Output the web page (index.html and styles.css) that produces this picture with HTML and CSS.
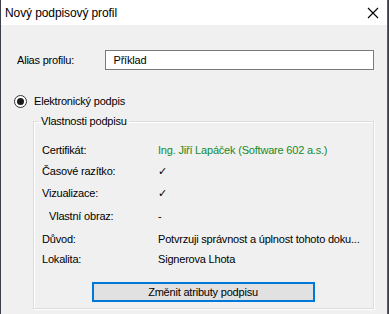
FILE: index.html
```html
<!DOCTYPE html>
<html lang="cs">
<head>
  <meta charset="UTF-8">
  <title>Nový podpisový profil</title>
  <link rel="stylesheet" href="styles.css">
</head>
<body>
  <div class="window">
    <!-- titulek -->
    <div class="titlebar">
      <span class="title">Nový podpisový profil</span>
      <svg class="close" width="12" height="12" viewBox="0 0 12 12">
        <path d="M1 1 L11 11 M11 1 L1 11" stroke="#000" stroke-width="1.1" fill="none"/>
      </svg>
    </div>

    <div class="content">
      <div class="alias-row">
        <label class="alias-label">Alias profilu:</label>
        <div class="input">Příklad</div>
      </div>

      <div class="radio-row">
        <span class="radio"><span class="radio-dot"></span></span>
        <span>Elektronický podpis</span>
      </div>

      <fieldset class="group">
        <legend>Vlastnosti podpisu</legend>
        <div class="props">
          <div>Certifikát:</div>
          <div class="green">Ing. Jiří Lapáček (Software 602 a.s.)</div>
          <div>Časové razítko:</div>
          <div class="check">✓</div>
          <div>Vizualizace:</div>
          <div class="check">✓</div>
          <div class="sub">Vlastní obraz:</div>
          <div>-</div>
          <div>Důvod:</div>
          <div>Potvrzuji správnost a úplnost tohoto doku...</div>
          <div>Lokalita:</div>
          <div>Signerova Lhota</div>
        </div>
        <div class="btn-row">
          <button class="btn">Změnit atributy podpisu</button>
        </div>
      </fieldset>
    </div>
  </div>
</body>
</html>
```

FILE: styles.css
```css
body { margin: 0; background: #3a3f4a; font-family: 'Liberation Sans', Arial, sans-serif; font-size: 11px; letter-spacing: -0.2px; color: #000; }
.window { width: 386px; height: 314px; margin-left: 1px; background: #f0f0f0; border-right: 1px solid #5c5c5c; overflow: hidden; }
.titlebar { height: 25px; background: #fff; display: flex; justify-content: space-between; align-items: center; padding: 0 8px 0 4px; }
.title { font-size: 12px; letter-spacing: -0.1px; }
.close { display: block; }
.content { padding: 0 13px; }
.alias-row { display: flex; align-items: center; margin-top: 25px; padding-left: 3px; }
.alias-label { width: 88px; }
.input { width: 261px; height: 18px; line-height: 18px; border: 1px solid #7a7a7a; background: #fff; padding-left: 8px; }
.radio-row { display: flex; align-items: center; gap: 7px; margin-top: 23px; height: 16px; }
.radio { width: 11px; height: 11px; border: 1px solid #333; border-radius: 50%; background: #fff; display: flex; align-items: center; justify-content: center; }
.radio-dot { width: 7px; height: 7px; border-radius: 50%; background: #1a1a1a; }
.group { margin: 6px 0 0 19px; width: 341px; box-sizing: border-box; border: 1px solid #dcdcdc; box-shadow: inset 1px 1px 0 #fff, 1px 1px 0 #fff; padding: 13px 8px 5px 8px; height: 194px; }
.group legend { padding: 0 2px; margin-left: -3px; }
.props { display: grid; grid-template-columns: 116px auto; grid-template-rows: 20px 22px 22px 24px 21px 20px; align-items: center; white-space: nowrap; }
.green { color: #168a2a; }
.check { font-family: 'DejaVu Sans', sans-serif; font-size: 11px; }
.sub { padding-left: 7px; }
.btn-row { display: flex; justify-content: center; margin-top: 13px; margin-left: -1px; }
.btn { width: 223px; height: 20px; border: 2px solid #0078d7; background: #e1e1e1; font-family: inherit; font-size: 11px; letter-spacing: -0.2px; padding: 0; color: #000; }
```
